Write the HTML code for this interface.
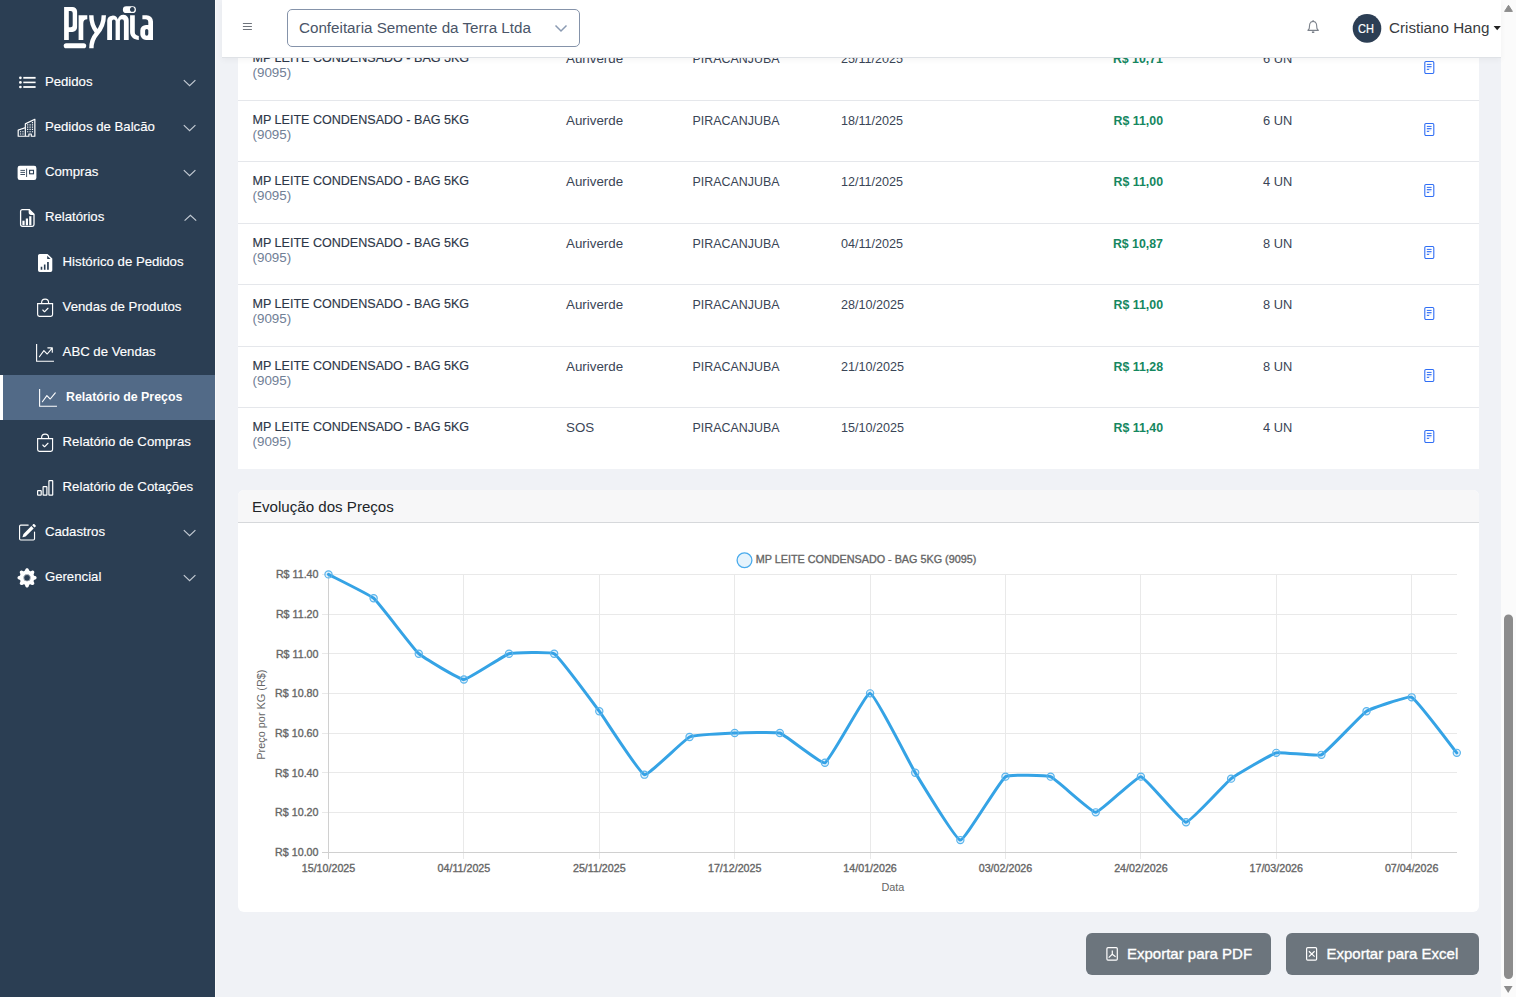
<!DOCTYPE html>
<html lang="pt-BR">
<head>
<meta charset="utf-8">
<title>Relatório de Preços</title>
<style>
*{box-sizing:border-box;margin:0;padding:0}
html,body{width:1516px;height:997px;overflow:hidden}
body{position:relative;background:#f0f2f6;font-family:"Liberation Sans",sans-serif;color:#2d3748}
.abs{position:absolute}
#sidebar{position:absolute;left:0;top:0;width:215px;height:997px;background:#2b3e53}
#sbedge{position:absolute;left:215px;top:0;width:1px;height:997px;background:#f9f9f9}
.mi{position:absolute;left:0;width:215px;height:45px;color:#fff;font-size:13.2px;-webkit-text-stroke:0.15px #fff;white-space:nowrap}
.mi .t{position:absolute;left:44.9px;top:14px;line-height:16px}
.mi.sub .t{left:62.6px}
.mi svg{position:absolute;left:0;top:0}
.mi.active{background:#526a87;border-left:3px solid #fff}
.mi.active .t{left:63px;font-weight:bold;font-size:12.4px;-webkit-text-stroke:0}
.chev{position:absolute;left:183px;top:19px;width:13px;height:8px}
#header{position:absolute;left:222px;top:0;width:1279px;height:58px;background:#fff;border-bottom:1px solid #dfe2e6;box-shadow:0 2px 6px rgba(0,0,0,.045);z-index:5}
#sel{position:absolute;left:65px;top:9px;width:293px;height:38px;border:1px solid #8593aa;border-radius:5px;background:#fff}
#sel .t{position:absolute;left:11px;top:9px;font-size:15.2px;line-height:17px;color:#4a5568;white-space:nowrap}
#tablecard{position:absolute;left:238px;top:0;width:1241px;height:469px;background:#fff;overflow:hidden}
.row{position:absolute;left:0;width:1241px;height:62px;border-bottom:1px solid #e5e7eb}
.c{position:absolute;font-size:12.6px;line-height:15px;white-space:nowrap;color:#2d3748}
.nm{left:14.5px;top:13px;font-size:12.55px;-webkit-text-stroke:0.15px #2d3748}
.cd{left:14.5px;top:27px;color:#718096;font-size:13.4px}
.fo{left:328px;top:13px;font-size:13.35px;color:#3a4556}
.ma{left:454.5px;top:13.5px;font-size:12.45px;color:#3a4556}
.dt{left:603px;top:13.5px;font-size:12.6px;color:#3a4556}
.pr{left:825px;width:100px;text-align:right;top:14px;font-weight:bold;color:#15875f;font-size:12.35px}
.qt{left:1025px;top:13px;font-size:12.85px;color:#3a4556}
.ic{position:absolute;left:1185px;top:22px}
#chartcard{position:absolute;left:238px;top:490px;width:1241px;height:422px;background:#fff;border-radius:6px;overflow:hidden}
#chhead{position:absolute;left:0;top:0;width:1241px;height:33px;background:#f7f7f8;border-bottom:1px solid #d6d8db}
#chhead .t{position:absolute;left:14px;top:8px;font-size:15.1px;line-height:17px;color:#212529;white-space:nowrap}
.btn{position:absolute;top:933px;height:42px;background:#6c757d;border-radius:6px;color:#fff;font-size:15px;-webkit-text-stroke:0.35px #fff;white-space:nowrap}
.btn .t{position:absolute;top:11.5px;line-height:17px}
#sb{position:absolute;left:1501px;top:0;width:15px;height:997px;background:#fbfbfb}
</style>
</head>
<body>
<div id="sidebar">
<div class="mi" style="top:60px"><span class="t">Pedidos</span></div>
<div class="mi" style="top:105px"><span class="t">Pedidos de Balcão</span></div>
<div class="mi" style="top:150px"><span class="t">Compras</span></div>
<div class="mi" style="top:195px"><span class="t">Relatórios</span></div>
<div class="mi sub" style="top:240px"><span class="t">Histórico de Pedidos</span></div>
<div class="mi sub" style="top:285px"><span class="t">Vendas de Produtos</span></div>
<div class="mi sub" style="top:330px"><span class="t">ABC de Vendas</span></div>
<div class="mi sub active" style="top:375px"><span class="t">Relatório de Preços</span></div>
<div class="mi sub" style="top:420px"><span class="t">Relatório de Compras</span></div>
<div class="mi sub" style="top:465px"><span class="t">Relatório de Cotações</span></div>
<div class="mi" style="top:510px"><span class="t">Cadastros</span></div>
<div class="mi" style="top:555px"><span class="t">Gerencial</span></div>
<svg class="abs" style="left:0;top:0" width="215" height="997" viewBox="0 0 215 997">
<!-- logo -->
<g fill="#fff">
<path fill-rule="evenodd" d="M64.1,6.9 H72.4 A4.7,4.7 0 0 1 77.1,11.6 V27.2 A4.7,4.7 0 0 1 72.4,31.9 H68.8 V39.9 H64.1 Z M68.8,11 V27.2 H70.75 A1.95,1.95 0 0 0 72.7,25.25 V12.95 A1.95,1.95 0 0 0 70.75,11 Z"/>
<rect x="63.7" y="43.2" width="22.5" height="5.1" rx="2.55"/>
<path d="M78.6,15.2 H87.3 V19.2 C84.6,19.2 83.3,20.8 83.3,23.2 V39.9 H78.6 Z"/>
<path d="M107.2,39.9 V20.7 A5.4,5.4 0 0 1 117.8,19.6 A5.4,5.4 0 0 1 128.7,20.7 V39.9 H123.9 V21.3 A2,2 0 0 0 119.9,21.3 V39.9 H115.6 V21.3 A1.8,1.8 0 0 0 112,21.3 V39.9 Z"/>
<path d="M130.1,15.2 H134.8 V32.2 C134.8,34.3 136.4,35.7 138.8,35.9 V39.9 C134,39.9 130.1,36.6 130.1,32.2 Z"/>
<path fill-rule="evenodd" d="M126.3,6.2 H132.5 A3.45,3.45 0 0 1 132.5,13.1 H126.3 A3.45,3.45 0 0 1 126.3,6.2 Z M132.3,7.1 A2.35,2.35 0 1 0 132.31,7.1 Z"/>
<path fill-rule="evenodd" d="M142.4,15.2 H146.6 A6.4,6.4 0 0 1 153,21.6 V39.9 H146 A5.7,5.7 0 0 1 140.3,34.2 V30.6 A5.7,5.7 0 0 1 146,24.9 H148.3 V22.1 A2.9,2.9 0 0 0 145.4,19.2 H142.4 Z M146.7,29 A1.6,1.6 0 0 0 145.1,30.6 V34.1 A1.6,1.6 0 0 0 146.7,35.7 A1.6,1.6 0 0 0 148.3,34.1 V30.6 A1.6,1.6 0 0 0 146.7,29 Z"/>
</g>
<g fill="none" stroke="#fff" stroke-width="4.4">
<path d="M91.3,15.2 C91.3,22.5 93.3,27.5 96.8,31.8"/>
<path d="M103.8,15.2 C103.8,24 100.4,29.5 96.6,33.8 C93.2,37.8 91.4,42 91.4,48.3"/>
</g>
<!-- chevrons -->
<g fill="none" stroke="#c3cad3" stroke-width="1.2">
<path d="M183.8,125.1 L189.6,130.6 L195.4,125.1" transform="translate(0,-45)"/>
<path d="M183.8,125.1 L189.6,130.6 L195.4,125.1"/>
<path d="M183.8,125.1 L189.6,130.6 L195.4,125.1" transform="translate(0,45)"/>
<path d="M184.6,220.6 L190.4,215.2 L196.2,220.6"/>
<path d="M183.8,125.1 L189.6,130.6 L195.4,125.1" transform="translate(0,405)"/>
<path d="M183.8,125.1 L189.6,130.6 L195.4,125.1" transform="translate(0,450)"/>
</g>
<!-- icons -->
<g fill="#fff">
<circle cx="20.4" cy="77.8" r="1.35"/><circle cx="20.4" cy="82.4" r="1.35"/><circle cx="20.4" cy="87" r="1.35"/>
<rect x="23.3" y="76.9" width="12.3" height="1.8"/><rect x="23.3" y="81.6" width="12.3" height="1.6"/><rect x="23.3" y="86.1" width="12.3" height="1.8"/>
</g>
<g fill="#fff" transform="translate(17.6,118.7) scale(1.19,1.13)">
<path d="M14.763.075A.5.5 0 0 1 15 .5v15a.5.5 0 0 1-.5.5h-3a.5.5 0 0 1-.5-.5V14h-1v1.5a.5.5 0 0 1-.5.5h-9a.5.5 0 0 1-.5-.5V10a.5.5 0 0 1 .342-.474L6 7.64V4.5a.5.5 0 0 1 .276-.447l8-4a.5.5 0 0 1 .487.022M6 8.694 1 10.36V15h5zM7 15h2v-1.5a.5.5 0 0 1 .5-.5h2a.5.5 0 0 1 .5.5V15h2V1.309l-7 3.5z"/>
<path d="M2 11h1v1H2zm2 0h1v1H4zm-2 2h1v1H2zm2 0h1v1H4zm4-4h1v1H8zm2 0h1v1h-1zm-2 2h1v1H8zm2 0h1v1h-1zm2-2h1v1h-1zm0 2h1v1h-1zM8 7h1v1H8zm2 0h1v1h-1zm2 0h1v1h-1zM8 5h1v1H8zm2 0h1v1h-1zm2 0h1v1h-1zm0-2h1v1h-1z"/>
</g>
<rect x="17.6" y="165.8" width="18.8" height="14.2" rx="2.2" fill="#fff"/>
<g fill="none" stroke="#2b3e53" stroke-width="0.9">
<path d="M20.4,170.4 H25 M20.4,172.4 H25 M20.4,174.5 H25 M26.6,168.6 V177"/>
<rect x="29.6" y="170.3" width="3.9" height="3.5" stroke-width="1.1"/>
</g>
<g fill="none" stroke="#fff" stroke-width="1.3">
<path d="M22.3,209.6 H29.3 L34,214.3 V224.6 A1.7,1.7 0 0 1 32.3,226.3 H22.3 A1.7,1.7 0 0 1 20.6,224.6 V211.3 A1.7,1.7 0 0 1 22.3,209.6 Z"/>
<path d="M29.3,209.6 V212.6 A1.7,1.7 0 0 0 31,214.3 H34"/>
<path d="M29.3,209.6 L34,214.3 H31 A1.7,1.7 0 0 1 29.3,212.6 Z" fill="#fff" stroke="none"/>
</g>
<g fill="#fff"><rect x="22.4" y="220.7" width="2.2" height="4.6"/><rect x="25.8" y="218.5" width="2.2" height="6.8"/><rect x="29.2" y="216.2" width="2.2" height="9.1"/></g>
<path fill="#fff" fill-rule="evenodd" d="M39.8,253.9 H47.5 L52.3,258.6 V270.2 A1.8,1.8 0 0 1 50.5,272 H39.8 A1.8,1.8 0 0 1 38,270.2 V255.7 A1.8,1.8 0 0 1 39.8,253.9 Z M40.7,266.8 V269.8 H42.3 V266.8 Z M43.9,264.6 V269.8 H45.5 V264.6 Z M47.1,262 V269.8 H48.8 V262 Z"/>
<path fill="#2b3e53" d="M47.2,255.8 V259 H50.5 Z"/>
<g fill="#fff" transform="translate(35.9,298.5) scale(1.15)"><path d="M10.854 8.146a.5.5 0 0 1 0 .708l-3 3a.5.5 0 0 1-.708 0l-1.5-1.5a.5.5 0 0 1 .708-.708L7.5 10.793l2.646-2.647a.5.5 0 0 1 .708 0"/><path d="M8 1a2.5 2.5 0 0 1 2.5 2.5V4h-5v-.5A2.5 2.5 0 0 1 8 1m3.5 3v-.5a3.5 3.5 0 1 0-7 0V4H1v10a2 2 0 0 0 2 2h10a2 2 0 0 0 2-2V4zM2 5h12v9a1 1 0 0 1-1 1H3a1 1 0 0 1-1-1z"/></g>
<g fill="#fff" transform="translate(35.9,433.5) scale(1.15)"><path d="M10.854 8.146a.5.5 0 0 1 0 .708l-3 3a.5.5 0 0 1-.708 0l-1.5-1.5a.5.5 0 0 1 .708-.708L7.5 10.793l2.646-2.647a.5.5 0 0 1 .708 0"/><path d="M8 1a2.5 2.5 0 0 1 2.5 2.5V4h-5v-.5A2.5 2.5 0 0 1 8 1m3.5 3v-.5a3.5 3.5 0 1 0-7 0V4H1v10a2 2 0 0 0 2 2h10a2 2 0 0 0 2-2V4zM2 5h12v9a1 1 0 0 1-1 1H3a1 1 0 0 1-1-1z"/></g>
<g fill="none" stroke="#fff" stroke-width="1.4">

</g>
<g fill="#fff" fill-rule="evenodd" transform="translate(36.05,343.9) scale(1.12)"><path d="M0 0h1v15h15v1H0zm10 3.5a.5.5 0 0 1 .5-.5h4a.5.5 0 0 1 .5.5v4a.5.5 0 0 1-1 0V4.9l-3.613 4.417a.5.5 0 0 1-.74.037L7.06 6.767l-3.656 5.027a.5.5 0 0 1-.808-.588l4-5.5a.5.5 0 0 1 .758-.06l2.609 2.61L13.445 4H10.5a.5.5 0 0 1-.5-.5"/></g>
<g fill="#fff" fill-rule="evenodd" transform="translate(39.05,388.9) scale(1.12)"><path d="M0 0h1v15h15v1H0zm14.817 3.113a.5.5 0 0 1 .07.704l-4.5 5.5a.5.5 0 0 1-.74.037L7.06 6.767l-3.656 5.027a.5.5 0 0 1-.808-.588l4-5.5a.5.5 0 0 1 .758-.06l2.609 2.61 4.15-5.073a.5.5 0 0 1 .704-.07"/></g>
<g fill="none" stroke="#fff" stroke-width="1.2">
<rect x="37.6" y="490.6" width="3.6" height="4.6" rx="0.5"/>
<rect x="43.1" y="486.6" width="3.8" height="8.6" rx="0.5"/>
<rect x="48.9" y="480.6" width="3.8" height="14.6" rx="0.5"/>
</g>
<g fill="#fff" transform="translate(17.85,523.35) scale(1.15)"><path d="M15.502 1.94a.5.5 0 0 1 0 .706L14.459 3.69l-2-2L13.502.646a.5.5 0 0 1 .707 0l1.293 1.293zm-1.75 2.456-2-2L4.939 9.21a.5.5 0 0 0-.121.196l-.805 2.414a.25.25 0 0 0 .316.316l2.414-.805a.5.5 0 0 0 .196-.12l6.813-6.814z"/><path fill-rule="evenodd" d="M1 13.5A1.5 1.5 0 0 0 2.5 15h11a1.5 1.5 0 0 0 1.5-1.5v-6a.5.5 0 0 0-1 0v6a.5.5 0 0 1-.5.5h-11a.5.5 0 0 1-.5-.5v-11a.5.5 0 0 1 .5-.5H9a.5.5 0 0 0 0-1H2.5A1.5 1.5 0 0 0 1 2.5z"/></g>
<path fill="#fff" transform="translate(17.45,568.2) scale(1.2)" d="M9.405 1.05c-.413-1.4-2.397-1.4-2.81 0l-.1.34a1.464 1.464 0 0 1-2.105.872l-.31-.17c-1.283-.698-2.686.705-1.987 1.987l.169.311c.446.82.023 1.841-.872 2.105l-.34.1c-1.4.413-1.4 2.397 0 2.81l.34.1a1.464 1.464 0 0 1 .872 2.105l-.17.31c-.698 1.283.705 2.686 1.987 1.987l.311-.169a1.464 1.464 0 0 1 2.105.872l.1.34c.413 1.4 2.397 1.4 2.81 0l.1-.34a1.464 1.464 0 0 1 2.105-.872l.31.17c1.283.698 2.686-.705 1.987-1.987l-.169-.311a1.464 1.464 0 0 1 .872-2.105l.34-.1c1.4-.413 1.4-2.397 0-2.81l-.34-.1a1.464 1.464 0 0 1-.872-2.105l.17-.31c.698-1.283-.705-2.686-1.987-1.987l-.311.169a1.464 1.464 0 0 1-2.105-.872zM8 10.93a2.929 2.929 0 1 1 0-5.86 2.929 2.929 0 0 1 0 5.858z"/><circle cx="27.05" cy="577.8" r="3.3" fill="none" stroke="#fff" stroke-width="0.5"/>
</svg>
</div>
<div id="sbedge"></div>
<div id="tablecard">
<div class="row" style="top:38px;height:61.5px;border-bottom:none;"><span class="c nm">MP LEITE CONDENSADO - BAG 5KG</span><span class="c cd">(9095)</span><span class="c fo">Auriverde</span><span class="c ma">PIRACANJUBA</span><span class="c dt">25/11/2025</span><span class="c pr">R$ 10,71</span><span class="c qt">6 UN</span><svg class="ic" width="12" height="15" viewBox="0 0 12 15"><rect x="1.8" y="1.5" width="9" height="12" rx="1.2" fill="none" stroke="#2f6ef5" stroke-width="1.1"/><path d="M3.8,4.4 H8.6 M3.8,6.6 H8.6 M3.8,9.4 H6.2" stroke="#2f6ef5" stroke-width="1" fill="none"/><path d="M3.8,7.9 H8.4" stroke="#2f6ef5" stroke-opacity="0.35" stroke-width="1" fill="none"/></svg></div>
<div class="row" style="top:100px;height:61.5px;border-bottom:none;"><span class="c nm">MP LEITE CONDENSADO - BAG 5KG</span><span class="c cd">(9095)</span><span class="c fo">Auriverde</span><span class="c ma">PIRACANJUBA</span><span class="c dt">18/11/2025</span><span class="c pr">R$ 11,00</span><span class="c qt">6 UN</span><svg class="ic" width="12" height="15" viewBox="0 0 12 15"><rect x="1.8" y="1.5" width="9" height="12" rx="1.2" fill="none" stroke="#2f6ef5" stroke-width="1.1"/><path d="M3.8,4.4 H8.6 M3.8,6.6 H8.6 M3.8,9.4 H6.2" stroke="#2f6ef5" stroke-width="1" fill="none"/><path d="M3.8,7.9 H8.4" stroke="#2f6ef5" stroke-opacity="0.35" stroke-width="1" fill="none"/></svg></div>
<div class="row" style="top:161px;height:61.5px;border-bottom:none;"><span class="c nm">MP LEITE CONDENSADO - BAG 5KG</span><span class="c cd">(9095)</span><span class="c fo">Auriverde</span><span class="c ma">PIRACANJUBA</span><span class="c dt">12/11/2025</span><span class="c pr">R$ 11,00</span><span class="c qt">4 UN</span><svg class="ic" width="12" height="15" viewBox="0 0 12 15"><rect x="1.8" y="1.5" width="9" height="12" rx="1.2" fill="none" stroke="#2f6ef5" stroke-width="1.1"/><path d="M3.8,4.4 H8.6 M3.8,6.6 H8.6 M3.8,9.4 H6.2" stroke="#2f6ef5" stroke-width="1" fill="none"/><path d="M3.8,7.9 H8.4" stroke="#2f6ef5" stroke-opacity="0.35" stroke-width="1" fill="none"/></svg></div>
<div class="row" style="top:223px;height:61.5px;border-bottom:none;"><span class="c nm">MP LEITE CONDENSADO - BAG 5KG</span><span class="c cd">(9095)</span><span class="c fo">Auriverde</span><span class="c ma">PIRACANJUBA</span><span class="c dt">04/11/2025</span><span class="c pr">R$ 10,87</span><span class="c qt">8 UN</span><svg class="ic" width="12" height="15" viewBox="0 0 12 15"><rect x="1.8" y="1.5" width="9" height="12" rx="1.2" fill="none" stroke="#2f6ef5" stroke-width="1.1"/><path d="M3.8,4.4 H8.6 M3.8,6.6 H8.6 M3.8,9.4 H6.2" stroke="#2f6ef5" stroke-width="1" fill="none"/><path d="M3.8,7.9 H8.4" stroke="#2f6ef5" stroke-opacity="0.35" stroke-width="1" fill="none"/></svg></div>
<div class="row" style="top:284px;height:61.5px;border-bottom:none;"><span class="c nm">MP LEITE CONDENSADO - BAG 5KG</span><span class="c cd">(9095)</span><span class="c fo">Auriverde</span><span class="c ma">PIRACANJUBA</span><span class="c dt">28/10/2025</span><span class="c pr">R$ 11,00</span><span class="c qt">8 UN</span><svg class="ic" width="12" height="15" viewBox="0 0 12 15"><rect x="1.8" y="1.5" width="9" height="12" rx="1.2" fill="none" stroke="#2f6ef5" stroke-width="1.1"/><path d="M3.8,4.4 H8.6 M3.8,6.6 H8.6 M3.8,9.4 H6.2" stroke="#2f6ef5" stroke-width="1" fill="none"/><path d="M3.8,7.9 H8.4" stroke="#2f6ef5" stroke-opacity="0.35" stroke-width="1" fill="none"/></svg></div>
<div class="row" style="top:346px;height:61.5px;border-bottom:none;"><span class="c nm">MP LEITE CONDENSADO - BAG 5KG</span><span class="c cd">(9095)</span><span class="c fo">Auriverde</span><span class="c ma">PIRACANJUBA</span><span class="c dt">21/10/2025</span><span class="c pr">R$ 11,28</span><span class="c qt">8 UN</span><svg class="ic" width="12" height="15" viewBox="0 0 12 15"><rect x="1.8" y="1.5" width="9" height="12" rx="1.2" fill="none" stroke="#2f6ef5" stroke-width="1.1"/><path d="M3.8,4.4 H8.6 M3.8,6.6 H8.6 M3.8,9.4 H6.2" stroke="#2f6ef5" stroke-width="1" fill="none"/><path d="M3.8,7.9 H8.4" stroke="#2f6ef5" stroke-opacity="0.35" stroke-width="1" fill="none"/></svg></div>
<div class="row" style="top:407px;height:61.5px;border-bottom:none;"><span class="c nm">MP LEITE CONDENSADO - BAG 5KG</span><span class="c cd">(9095)</span><span class="c fo">SOS</span><span class="c ma">PIRACANJUBA</span><span class="c dt">15/10/2025</span><span class="c pr">R$ 11,40</span><span class="c qt">4 UN</span><svg class="ic" width="12" height="15" viewBox="0 0 12 15"><rect x="1.8" y="1.5" width="9" height="12" rx="1.2" fill="none" stroke="#2f6ef5" stroke-width="1.1"/><path d="M3.8,4.4 H8.6 M3.8,6.6 H8.6 M3.8,9.4 H6.2" stroke="#2f6ef5" stroke-width="1" fill="none"/><path d="M3.8,7.9 H8.4" stroke="#2f6ef5" stroke-opacity="0.35" stroke-width="1" fill="none"/></svg></div>
<div class="abs" style="left:0;top:100px;width:1241px;height:1px;background:#e5e7eb"></div><div class="abs" style="left:0;top:161px;width:1241px;height:1px;background:#e5e7eb"></div><div class="abs" style="left:0;top:223px;width:1241px;height:1px;background:#e5e7eb"></div><div class="abs" style="left:0;top:284px;width:1241px;height:1px;background:#e5e7eb"></div><div class="abs" style="left:0;top:346px;width:1241px;height:1px;background:#e5e7eb"></div><div class="abs" style="left:0;top:407px;width:1241px;height:1px;background:#e5e7eb"></div>
</div><div id="header">
<svg class="abs" style="left:0;top:0" width="1279" height="57" viewBox="222 0 1279 57">
<g stroke="#6f747c" stroke-width="1" fill="none"><path d="M242.9,23.5 H251.9 M242.9,26.5 H251.9 M242.9,29.5 H251.9"/></g>
<path d="M556,25 L561.6,30.6 L567.2,25" fill="none" stroke="#4a5568" stroke-width="1.3"/>
<g fill="none" stroke="#7d838c" stroke-width="1.1" stroke-linejoin="round"><path d="M1307.9,30.4 H1318.3 L1317,28.6 C1316.6,26 1316.7,24.6 1316.3,23.6 C1315.8,22.1 1314.5,21.4 1313.1,21.4 C1311.7,21.4 1310.4,22.1 1309.9,23.6 C1309.5,24.6 1309.6,26 1309.2,28.6 Z M1313.1,20 V21.4"/><path d="M1311.9,32.2 H1314.3" stroke-width="1.6"/></g>
<circle cx="1367" cy="28.4" r="14.3" fill="#2c3e54"/>
<path d="M1493.6,26 H1500.8 L1497.2,30.2 Z" fill="#222"/>
</svg>
<div id="sel"><span class="t">Confeitaria Semente da Terra Ltda</span><svg class="abs" style="left:266.3px;top:14px" width="14" height="9" viewBox="0 0 14 9"><path d="M1.5,1.5 L7,7 L12.5,1.5" fill="none" stroke="#8a9ab2" stroke-width="1.5"/></svg></div>
<span class="abs" style="left:1136.3px;top:21.5px;font-size:12.8px;line-height:14px;color:#fff;-webkit-text-stroke:0.2px #fff;white-space:nowrap;transform:scaleX(0.86);transform-origin:0 0">CH</span>
<span class="abs" style="left:1167px;top:19px;font-size:15.2px;line-height:17px;color:#383b40;white-space:nowrap">Cristiano Hang</span>
</div>
<div id="chartcard"><div id="chhead"><span class="t">Evolução dos Preços</span></div></div><svg class="abs" style="left:0;top:0" width="1516" height="997" viewBox="0 0 1516 997">
<g stroke="#e9e9e9" stroke-width="1" shape-rendering="crispEdges"><line x1="321.5" y1="574.40" x2="1457" y2="574.40"/><line x1="321.5" y1="614.06" x2="1457" y2="614.06"/><line x1="321.5" y1="653.71" x2="1457" y2="653.71"/><line x1="321.5" y1="693.37" x2="1457" y2="693.37"/><line x1="321.5" y1="733.03" x2="1457" y2="733.03"/><line x1="321.5" y1="772.69" x2="1457" y2="772.69"/><line x1="321.5" y1="812.34" x2="1457" y2="812.34"/><line x1="321.5" y1="852.00" x2="1457" y2="852.00"/><line x1="328.50" y1="574.40" x2="328.50" y2="859"/><line x1="463.90" y1="574.40" x2="463.90" y2="859"/><line x1="599.29" y1="574.40" x2="599.29" y2="859"/><line x1="734.69" y1="574.40" x2="734.69" y2="859"/><line x1="870.08" y1="574.40" x2="870.08" y2="859"/><line x1="1005.48" y1="574.40" x2="1005.48" y2="859"/><line x1="1140.88" y1="574.40" x2="1140.88" y2="859"/><line x1="1276.27" y1="574.40" x2="1276.27" y2="859"/><line x1="1411.67" y1="574.40" x2="1411.67" y2="859"/></g>
<line x1="328.5" y1="574.4" x2="328.5" y2="859" stroke="#d0d0d0" stroke-width="1" shape-rendering="crispEdges"/>
<line x1="321.5" y1="852.00" x2="1457" y2="852.00" stroke="#d0d0d0" stroke-width="1" shape-rendering="crispEdges"/>
<g font-family="Liberation Sans" font-size="10.7" fill="#666" stroke="#666" stroke-width="0.35"><text x="318.5" y="578.30" text-anchor="end">R$ 11.40</text><text x="318.5" y="617.96" text-anchor="end">R$ 11.20</text><text x="318.5" y="657.61" text-anchor="end">R$ 11.00</text><text x="318.5" y="697.27" text-anchor="end">R$ 10.80</text><text x="318.5" y="736.93" text-anchor="end">R$ 10.60</text><text x="318.5" y="776.59" text-anchor="end">R$ 10.40</text><text x="318.5" y="816.24" text-anchor="end">R$ 10.20</text><text x="318.5" y="855.90" text-anchor="end">R$ 10.00</text><text x="328.50" y="871.8" text-anchor="middle">15/10/2025</text><text x="463.90" y="871.8" text-anchor="middle">04/11/2025</text><text x="599.29" y="871.8" text-anchor="middle">25/11/2025</text><text x="734.69" y="871.8" text-anchor="middle">17/12/2025</text><text x="870.08" y="871.8" text-anchor="middle">14/01/2026</text><text x="1005.48" y="871.8" text-anchor="middle">03/02/2026</text><text x="1140.88" y="871.8" text-anchor="middle">24/02/2026</text><text x="1276.27" y="871.8" text-anchor="middle">17/03/2026</text><text x="1411.67" y="871.8" text-anchor="middle">07/04/2026</text></g>
<text x="892.9" y="891" text-anchor="middle" font-family="Liberation Sans" font-size="10.9" fill="#666">Data</text>
<text transform="translate(265,714.6) rotate(-90)" text-anchor="middle" font-family="Liberation Sans" font-size="10.9" fill="#666">Preço por KG (R$)</text>
<circle cx="744.5" cy="560.2" r="7.4" fill="#e6f3fc" stroke="#4aabec" stroke-width="1.3"/>
<text x="755.7" y="563.1" font-family="Liberation Sans" font-size="10.8" fill="#666" stroke="#666" stroke-width="0.35">MP LEITE CONDENSADO - BAG 5KG (9095)</text>
<path d="M328.50,574.40 C333.01,576.78 369.87,594.89 373.63,598.19 C378.90,602.82 413.54,649.01 418.76,653.71 C422.56,657.13 459.38,679.49 463.90,679.49 C468.41,679.49 504.20,655.09 509.03,653.71 C513.22,652.52 550.71,651.52 554.16,653.71 C559.74,657.27 594.92,705.36 599.29,711.22 C603.95,717.46 639.28,773.20 644.42,774.67 C648.31,775.78 684.46,739.35 689.56,736.99 C693.48,735.18 730.17,733.23 734.69,733.03 C739.19,732.83 775.71,731.68 779.82,733.03 C784.74,734.65 821.39,764.34 824.95,762.77 C830.41,760.37 865.79,692.90 870.08,693.37 C874.82,693.89 910.44,764.92 915.22,772.69 C919.46,779.59 955.74,839.90 960.35,840.10 C964.77,840.30 999.77,780.67 1005.48,776.65 C1008.79,774.32 1046.64,775.08 1050.61,776.65 C1055.67,778.65 1091.23,812.34 1095.74,812.34 C1100.26,812.34 1136.61,776.18 1140.88,776.65 C1145.63,777.17 1181.45,822.16 1186.01,822.26 C1190.47,822.36 1226.20,782.43 1231.14,778.63 C1235.23,775.49 1271.44,754.13 1276.27,752.86 C1280.47,751.75 1317.63,756.58 1321.40,754.84 C1326.65,752.42 1361.38,714.50 1366.54,711.22 C1370.41,708.75 1408.08,695.68 1411.67,697.34 C1417.11,699.85 1452.29,747.31 1456.80,752.86" fill="none" stroke="#35a3e5" stroke-width="3" stroke-linejoin="round" stroke-linecap="round"/>
<g fill="rgba(54,162,235,0.15)" stroke="#5ab4ec" stroke-width="1.2"><circle cx="328.50" cy="574.40" r="3.6"/><circle cx="373.63" cy="598.19" r="3.6"/><circle cx="418.76" cy="653.71" r="3.6"/><circle cx="463.90" cy="679.49" r="3.6"/><circle cx="509.03" cy="653.71" r="3.6"/><circle cx="554.16" cy="653.71" r="3.6"/><circle cx="599.29" cy="711.22" r="3.6"/><circle cx="644.42" cy="774.67" r="3.6"/><circle cx="689.56" cy="736.99" r="3.6"/><circle cx="734.69" cy="733.03" r="3.6"/><circle cx="779.82" cy="733.03" r="3.6"/><circle cx="824.95" cy="762.77" r="3.6"/><circle cx="870.08" cy="693.37" r="3.6"/><circle cx="915.22" cy="772.69" r="3.6"/><circle cx="960.35" cy="840.10" r="3.6"/><circle cx="1005.48" cy="776.65" r="3.6"/><circle cx="1050.61" cy="776.65" r="3.6"/><circle cx="1095.74" cy="812.34" r="3.6"/><circle cx="1140.88" cy="776.65" r="3.6"/><circle cx="1186.01" cy="822.26" r="3.6"/><circle cx="1231.14" cy="778.63" r="3.6"/><circle cx="1276.27" cy="752.86" r="3.6"/><circle cx="1321.40" cy="754.84" r="3.6"/><circle cx="1366.54" cy="711.22" r="3.6"/><circle cx="1411.67" cy="697.34" r="3.6"/><circle cx="1456.80" cy="752.86" r="3.6"/></g>
</svg><div class="btn" style="left:1086px;width:185px"><svg class="abs" style="left:0;top:0" width="185" height="42" viewBox="1086 933 185 42"><rect x="1106.9" y="947.7" width="10.4" height="12.5" rx="1.1" fill="none" stroke="#fff" stroke-width="1.2"/><path d="M1112.3,950.5 V954.3 L1108.7,957.6 M1112.3,954.3 L1115.6,956.7" fill="none" stroke="#fff" stroke-width="1.2"/></svg><span class="t" style="left:41px">Exportar para PDF</span></div>
<div class="btn" style="left:1286px;width:193px"><svg class="abs" style="left:0;top:0" width="193" height="42" viewBox="1286 933 193 42"><rect x="1306.6" y="947.7" width="10" height="12.5" rx="1.1" fill="none" stroke="#fff" stroke-width="1.2"/><path d="M1308.9,951.2 L1314.6,956.6 M1314.6,951.2 L1308.9,956.6" fill="none" stroke="#fff" stroke-width="1.2"/></svg><span class="t" style="left:40.5px">Exportar para Excel</span></div><div id="sb"><svg class="abs" style="left:0;top:0" width="15" height="997" viewBox="1501 0 15 997"><path d="M1504.6,11.4 L1508.5,5.3 L1512.4,11.4 Z" fill="#8c8c8c" stroke="#8c8c8c" stroke-width="1" stroke-linejoin="round"/><rect x="1504" y="614.5" width="9" height="364.5" rx="4.5" fill="#8c8c8c"/><path d="M1503.8,986 L1512.6,986 L1508.2,993 Z" fill="#8c8c8c"/></svg></div>
</body>
</html>
